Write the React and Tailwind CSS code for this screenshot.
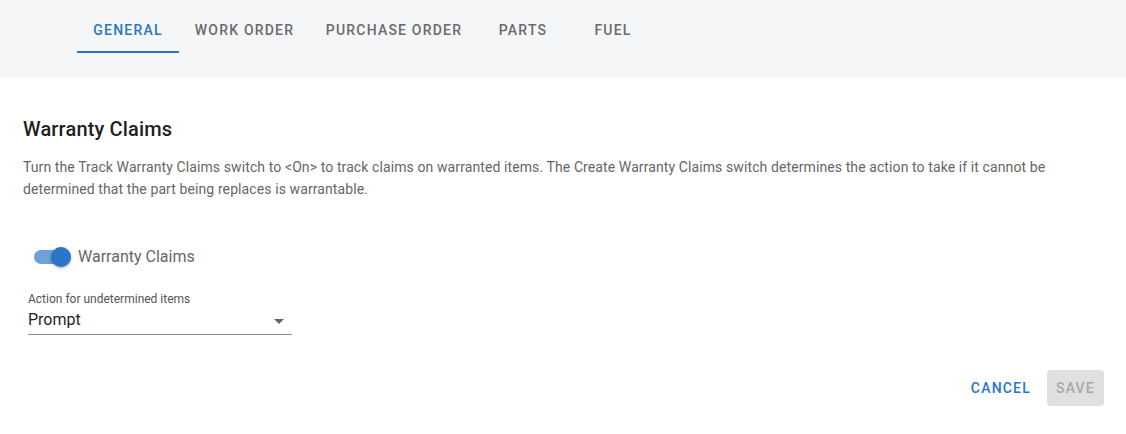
export default function App() {
  const tabs = [
    { label: "GENERAL", w: "w-[102px]", active: true },
    { label: "WORK ORDER", w: "w-[131px]" },
    { label: "PURCHASE ORDER", w: "w-[168px]" },
    { label: "PARTS", w: "w-[90px]" },
    { label: "FUEL", w: "w-[90px]" },
  ];
  return (
    <div className="w-[1126px] h-[434px] bg-white font-['Roboto',sans-serif] overflow-hidden">
      <div className="h-[76px] bg-[#f5f6f8] shadow-[0_1px_2px_rgba(0,0,0,0.08)] pt-[5px] pl-[77px] relative">
        <div className="flex h-[48px]">
          {tabs.map((t) => (
            <div
              key={t.label}
              className={`${t.w} relative flex items-center justify-center pt-[2px] text-[14px] font-medium tracking-[1.2px] ${t.active ? "text-[#2a76c6]" : "text-[#6b6b6b]"}`}
            >
              {t.label}
              {t.active && <div className="absolute left-0 right-0 bottom-0 h-[2px] bg-[#2a76c6]" />}
            </div>
          ))}
        </div>
      </div>
      <div className="px-[23px] pt-[41px]">
        <h2 className="text-[20px] font-medium text-[#1f1f1f] leading-[24px] tracking-[0.15px]">Warranty Claims</h2>
        <p className="mt-[15px] text-[14px] leading-[22px] text-[#666666] tracking-[0.1px]">
          Turn the Track Warranty Claims switch to &lt;On&gt; to track claims on warranted items. The Create Warranty Claims switch determines the action to take if it cannot be determined that the part being replaces is warrantable.
        </p>
        <div className="mt-[38px] flex items-center h-[38px] pl-[11px]">
          <div className="relative w-[38px] h-[20px] flex items-center">
            <div className="w-[34px] h-[14px] rounded-full bg-[#6fa0d8]" />
            <div className="absolute left-[17px] top-0 w-[20px] h-[20px] rounded-full bg-[#2a76c6] shadow-[0_1px_3px_rgba(0,0,0,0.35)]" />
          </div>
          <span className="ml-[6px] text-[16px] text-[#666666]">Warranty Claims</span>
        </div>
        <div className="mt-[16px] ml-[5px] w-[264px]">
          <div className="text-[12px] leading-[14px] text-[#555555]">Action for undetermined items</div>
          <div className="flex items-center justify-between h-[24px] mt-[2px] border-b border-[#8a8a8a] pb-[2px] box-content">
            <span className="text-[16px] text-[#1f1f1f]">Prompt</span>
            <svg width="24" height="24" viewBox="0 0 24 24" className="mr-[1px] mt-[2px]">
              <path d="M7 10l5 5 5-5z" fill="#666666" />
            </svg>
          </div>
        </div>
        <div className="flex justify-end items-center gap-[8px] mt-[35px] mr-[-1px]">
          <button className="h-[36px] px-[8px] text-[14px] font-medium tracking-[1.2px] text-[#2a76c6]">CANCEL</button>
          <button className="h-[36px] w-[57px] rounded-[4px] bg-[#e0e0e0] text-[14px] font-medium tracking-[1.2px] text-[#a8a8a8]">SAVE</button>
        </div>
      </div>
    </div>
  );
}
